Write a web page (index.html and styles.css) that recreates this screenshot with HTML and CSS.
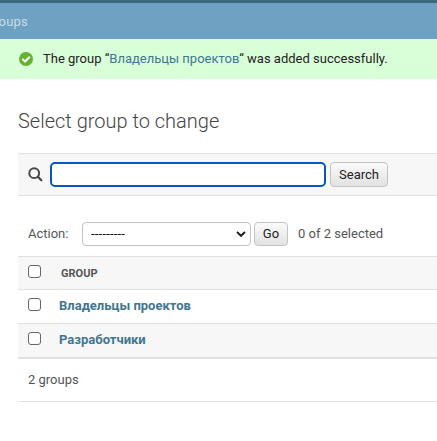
FILE: index.html
```html
<!DOCTYPE html>
<html lang="en">
<head>
<meta charset="utf-8">
<title>Select group to change</title>
<link rel="stylesheet" href="styles.css">
</head>
<body>
<header class="header"></header>
<nav class="breadcrumbs"><span class="crumb">Groups</span></nav>
<div class="message">
  <svg class="tick" viewBox="0 0 14 14"><circle cx="7" cy="7" r="7" fill="#64b22d"/><path d="M3.4 6.9 6 9.5l4.8-4.8" fill="none" stroke="#fff" stroke-width="2"/></svg>
  <p class="message-text">The group “<a class="link">Владельцы проектов</a>“ was added successfully.</p>
</div>
<main class="content">
  <h1 class="title">Select group to change</h1>
  <form class="toolbar">
    <svg class="glass" viewBox="0 0 15 15" fill="none" stroke="#484848"><circle cx="6.2" cy="6.2" r="4.9" stroke-width="2"/><path d="m9.8 9.8 3.5 3.5" stroke-width="2.3" stroke-linecap="round"/></svg>
    <input class="search" type="text" aria-label="Search groups">
    <button class="button" type="button">Search</button>
  </form>
  <div class="actions">
    <span class="actions-label">Action:</span>
    <div class="select"><span class="dashes">---------</span><svg class="chevron" viewBox="0 0 10 6"><path d="m1 1 4 3.8L9 1" fill="none" stroke="#222" stroke-width="2"/></svg></div>
    <button class="button go" type="button">Go</button>
    <span class="counter">0 of 2 selected</span>
  </div>
  <div class="row head"><span class="check"></span><span class="column">GROUP</span></div>
  <div class="row first"><span class="check"></span><a class="name">Владельцы проектов</a></div>
  <div class="row second"><span class="check"></span><a class="name">Разработчики</a></div>
  <p class="paginator">2 groups</p>
</main>
</body>
</html>
```
FILE: styles.css
```css
* { box-sizing: border-box; }
body {
  margin: 0;
  height: 441px;
  overflow: hidden;
  background: #fff;
  color: #555;
  font: 13px/16px Roboto, sans-serif;
}
.header { height: 3px; background: #396a80; }
.breadcrumbs {
  display: flex;
  align-items: center;
  height: 36px;
  padding-top: 1px;
  background: #6fa2c2;
  color: #c4dce8;
}
.crumb { margin-left: -15px; letter-spacing: .2px; }
.message {
  display: flex;
  align-items: center;
  height: 40px;
  padding-left: 19px;
  background: #d9ffd9;
  color: #222;
}
.tick { width: 14px; height: 14px; margin-right: 10px; }
.message-text { margin: 0; white-space: nowrap; }
.link { color: #407692; }
.content { padding: 29px 0 0 18px; }
.title {
  margin: 0 0 32px;
  height: 13px;
  font-size: 20px;
  font-weight: 300;
  line-height: 26px;
  color: #444;
}
.toolbar {
  display: flex;
  align-items: center;
  height: 43px;
  padding-left: 10px;
  background: #f7f7f7;
  border: solid #e1e1e1;
  border-width: 1px 0;
}
.glass { width: 15px; height: 15px; margin-right: 7px; }
.search {
  width: 276px;
  height: 25px;
  padding: 0 5px;
  border: 2px solid #0757bf;
  border-radius: 5px;
  outline: none;
  background: #fff;
}
.button {
  width: 58px;
  height: 25px;
  margin-left: 4px;
  padding: 0;
  border: 1px solid #c3c3c3;
  border-radius: 4px;
  background: linear-gradient(#fafafa, #e2e2e2);
  color: #222;
  font: inherit;
}
.actions {
  display: flex;
  align-items: center;
  height: 24px;
  margin: 26px 0 10px;
  padding-left: 10px;
}
.actions-label { width: 54px; }
.select {
  display: flex;
  align-items: center;
  justify-content: space-between;
  width: 169px;
  height: 24px;
  padding: 0 4px 0 8px;
  border: 1px solid #c3c3c3;
  border-radius: 4px;
  color: #111;
}
.dashes { letter-spacing: .2px; }
.chevron { width: 10px; height: 6px; }
.go { width: 34px; height: 24px; margin-left: 3px; }
.counter { margin-left: 10px; }
.row {
  display: flex;
  align-items: center;
  height: 34px;
  padding: 0 0 2px 10px;
  border-bottom: 1px solid #e1e1e1;
}
.head { padding-bottom: 0; background: #f7f7f7; border-top: 1px solid #e1e1e1; }
.second { height: 35px; background: #f7f7f7; border-bottom-width: 2px; }
.check {
  width: 13px;
  height: 13px;
  margin: -3px 18px 0 0;
  border: 1px solid #666;
  border-radius: 3px;
  background: #fff;
}
.column { margin: 2px 0 0 2px; font-size: 11px; font-weight: 700; }
.name { font-weight: 700; color: #417690; }
.paginator {
  margin: 0;
  height: 43px;
  padding: 13px 0 0 10px;
  border-bottom: 1px solid #e1e1e1;
}
```
